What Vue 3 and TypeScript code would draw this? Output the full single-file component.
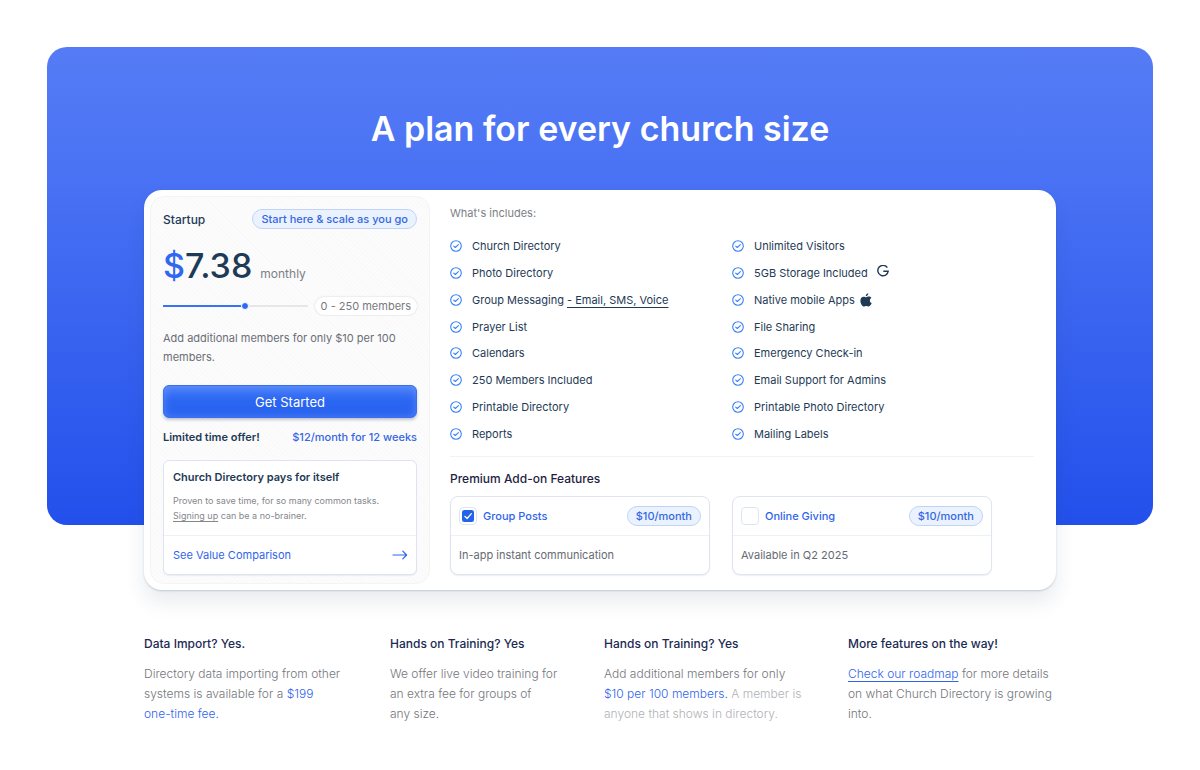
<script setup lang="ts">
import { computed, ref } from 'vue'

interface Feature {
  label: string
  link?: string
  icon?: 'google' | 'apple'
}

interface Addon {
  id: string
  name: string
  price: string
  note: string
  checked: boolean
}

const features: Feature[] = [
  { label: 'Church Directory' },
  { label: 'Unlimited Visitors' },
  { label: 'Photo Directory' },
  { label: '5GB Storage Included', icon: 'google' },
  { label: 'Group Messaging', link: '- Email, SMS, Voice' },
  { label: 'Native mobile Apps', icon: 'apple' },
  { label: 'Prayer List' },
  { label: 'File Sharing' },
  { label: 'Calendars' },
  { label: 'Emergency Check-in' },
  { label: '250 Members Included' },
  { label: 'Email Support for Admins' },
  { label: 'Printable Directory' },
  { label: 'Printable Photo Directory' },
  { label: 'Reports' },
  { label: 'Mailing Labels' },
]

const addons = ref<Addon[]>([
  { id: 'posts', name: 'Group Posts', price: '$10/month', note: 'In-app instant communication', checked: true },
  { id: 'giving', name: 'Online Giving', price: '$10/month', note: 'Available in Q2 2025', checked: false },
])

const size = ref(57)
const fill = computed(() => ({ '--fill': `${size.value}%` }))
</script>

<template>
  <main class="page">
    <section class="hero">
      <h1 class="hero-title">A plan for every church size</h1>

      <div class="plan">
        <div class="offer">
          <div class="row">
            <h2 class="offer-name">Startup</h2>
            <span class="pill">Start here &amp; scale as you go</span>
          </div>
          <p class="price">
            <span class="amount"><span class="currency">$</span>7.38</span>
            <span class="period">monthly</span>
          </p>
          <div class="row slider-row">
            <input id="size" v-model.number="size" class="slider" type="range" min="0" max="100" :style="fill" />
            <label class="size-label" for="size">0 - 250 members</label>
          </div>
          <p class="extra">Add additional members for only $10 per 100 members.</p>
          <button class="cta" type="button">Get Started</button>
          <div class="row deal">
            <strong>Limited time offer!</strong>
            <span class="deal-price">$12/month for 12 weeks</span>
          </div>
          <div class="box value">
            <div class="value-text">
              <h3>Church Directory pays for itself</h3>
              <p>Proven to save time, for so many common tasks. <a href="#signup">Signing up</a> can be a no-brainer.</p>
            </div>
            <a class="row value-link" href="#compare">
              See Value Comparison
              <svg width="16" height="10" viewBox="0 0 16 10" fill="none" stroke="currentColor" stroke-width="1.2" stroke-linecap="round" stroke-linejoin="round" aria-hidden="true">
                <path d="M1 5h13.6M10.8 1.2 14.6 5l-3.8 3.8" />
              </svg>
            </a>
          </div>
        </div>

        <div class="details">
          <p class="includes">What's includes:</p>
          <ul class="features">
            <li v-for="f in features" :key="f.label">
              <svg class="tick" width="12" height="12" viewBox="0 0 12 12" fill="none" stroke="currentColor" stroke-linecap="round" stroke-linejoin="round" aria-hidden="true">
                <circle cx="6" cy="6" r="5.3" stroke-width="1.1" />
                <path d="M3.7 6.1 5.3 7.5 8.4 4.6" stroke-width="1.1" />
              </svg>
              <span>{{ f.label }}<template v-if="f.link">&nbsp;<a href="#messaging">{{ f.link }}</a></template></span>
              <svg v-if="f.icon === 'google'" class="brand google" width="12" height="12" viewBox="0 0 12 12" fill="none" stroke="currentColor" stroke-width="1.4" aria-hidden="true">
                <path d="M10.3 2.6A5.2 5.2 0 1 0 11.2 6.2H6.3" />
              </svg>
              <svg v-if="f.icon === 'apple'" class="brand" width="12" height="14" viewBox="0 0 12 14" fill="currentColor" aria-hidden="true">
                <path d="M8.3.3C8.4 1.8 7.2 3.2 5.8 3.2 5.6 1.8 7 .4 8.3.3ZM11.4 5C10.2 5.7 9.7 6.7 9.9 7.9 10 8.9 10.7 9.7 11.7 10.1 11.1 11.8 9.9 13.5 8.7 13.5 7.8 13.5 7.3 13 6.3 13 5.3 13 4.8 13.5 3.9 13.5 2.2 13.5.4 10.4.4 7.7.4 5.2 1.9 3.7 3.6 3.7 4.7 3.7 5.4 4.3 6.2 4.3 6.9 4.3 7.7 3.6 8.9 3.6 9.8 3.6 10.8 4.1 11.4 5Z" />
              </svg>
            </li>
          </ul>
          <h2 class="addons-title">Premium Add-on Features</h2>
          <div class="addons">
            <div v-for="a in addons" :key="a.id" class="box addon">
              <div class="row addon-head">
                <label class="addon-name">
                  <span class="check">
                    <input v-model="a.checked" type="checkbox" />
                    <svg v-if="a.checked" width="12" height="12" viewBox="0 0 12 12" fill="none" aria-hidden="true">
                      <rect width="12" height="12" rx="2.5" fill="#2563eb" />
                      <path d="m2.8 6.3 2.3 2.2 4.3-4.9" stroke="#fff" stroke-width="1.2" stroke-linecap="round" stroke-linejoin="round" />
                    </svg>
                  </span>
                  {{ a.name }}
                </label>
                <span class="pill">{{ a.price }}</span>
              </div>
              <p class="addon-note">{{ a.note }}</p>
            </div>
          </div>
        </div>
      </div>
    </section>

    <section class="notes">
      <article>
        <h2>Data Import? Yes.</h2>
        <p>Directory data importing from other systems is available for a <em>$199 <br />one-time fee.</em></p>
      </article>
      <article>
        <h2>Hands on Training? Yes</h2>
        <p>We offer live video training for <br />an extra fee for groups of <br />any size.</p>
      </article>
      <article>
        <h2>Hands on Training? Yes</h2>
        <p>Add additional members for only <br /><em>$10 per 100 members.</em> <span class="faint">A member is anyone that shows in directory.</span></p>
      </article>
      <article>
        <h2>More features on the way!</h2>
        <p><a href="#roadmap">Check our roadmap</a> for more details on what Church Directory is growing into.</p>
      </article>
    </section>
  </main>
</template>

<style>
body {
  background: #fff;
}
</style>

<style scoped>
* {
  box-sizing: border-box;
}

h1,
h2,
h3,
p,
ul {
  margin: 0;
  padding: 0;
  font-weight: 400;
}

em {
  font-style: normal;
}

.page {
  padding: 47px 47px 40px;
  font-family: Inter, "Liberation Sans", sans-serif;
  font-size: 11px;
  color: #1e3a56;
}

.hero {
  display: flex;
  flex-direction: column;
  align-items: center;
  padding: 56px 24px 0;
  border-radius: 20px;
  background: linear-gradient(#557cf6, #4a73f4 25%, #2350eb);
}

.hero-title {
  margin-bottom: 35px;
  font-size: 34px;
  line-height: 52px;
  font-weight: 600;
  color: #fff;
}

.plan {
  display: flex;
  width: 100%;
  max-width: 912px;
  margin-bottom: -65px;
  padding: 6px;
  border-radius: 18px;
  background: #fff;
  box-shadow: 0 1px 2px rgba(30, 58, 100, 0.2), 0 12px 20px rgba(30, 58, 100, 0.1);
}

.row {
  display: flex;
  align-items: center;
  justify-content: space-between;
}

.offer {
  flex: 0 0 280px;
  padding: 12px 12px 8px;
  border: 1px solid #f4f4f5;
  border-radius: 14px;
  background: repeating-linear-gradient(45deg, #fcfcfc 0 2px, #f9f9fa 2px 3px);
}

.offer-name {
  font-size: 12px;
  font-weight: 500;
}

.pill {
  padding: 0 8px;
  border: 1px solid #bfd3fb;
  border-radius: 10px;
  background: #eaf2fe;
  font-size: 11px;
  line-height: 18px;
  font-weight: 500;
  color: #3567e3;
}

.price {
  display: flex;
  align-items: baseline;
  gap: 8px;
  margin-top: 13px;
}

.amount {
  font-size: 34px;
  line-height: 48px;
  font-weight: 500;
}

.currency {
  color: #3069f0;
}

.period {
  font-size: 12px;
  line-height: 16px;
  color: #7c7f86;
}

.slider-row {
  gap: 7px;
  margin-top: 7px;
}

.slider {
  flex: 1;
  min-width: 0;
  height: 8px;
  margin: 0;
  appearance: none;
  background: linear-gradient(90deg, #3b72f2 var(--fill), #e6e7ea var(--fill)) center / 100% 2px no-repeat;
}

.slider::-webkit-slider-thumb {
  width: 8px;
  height: 8px;
  appearance: none;
  border: 1px solid #fff;
  border-radius: 50%;
  background: #2f68f0;
}

.size-label {
  padding: 0 6px;
  border-radius: 9px;
  background: #fff;
  box-shadow: 0 0 2px rgba(20, 30, 60, 0.2);
  line-height: 18px;
  color: #77797f;
}

.extra {
  margin-top: 14px;
  line-height: 19px;
  color: #6b6e76;
}

.cta {
  display: block;
  width: 100%;
  height: 33px;
  margin-top: 18px;
  border: 1px solid #3a6df0;
  border-radius: 6px;
  background: linear-gradient(#4b80f8, #2c67f2 45%, #2560ee);
  box-shadow: inset 0 0 8px rgba(130, 170, 255, 0.5), 0 2px 3px rgba(20, 40, 90, 0.25);
  font: inherit;
  font-size: 13px;
  color: #fff;
}

.deal {
  margin: 10px 0 14px;
  line-height: 18px;
  font-weight: 500;
}

.deal strong {
  font-weight: 600;
}

.deal-price {
  color: #3567e3;
}

.box {
  border: 1px solid #dfe5ef;
  background: #fff;
  box-shadow: 0 1px 1px rgba(40, 60, 100, 0.08);
}

.value {
  border-radius: 6px;
}

.value-text {
  padding: 7px 9px 12px;
}

.value h3 {
  margin-bottom: 7px;
  font-size: 11px;
  line-height: 18px;
  font-weight: 600;
}

.value p {
  font-size: 9px;
  line-height: 15px;
  color: #85878c;
}

.value p a {
  color: inherit;
  text-underline-offset: 2px;
}

.value-link {
  padding: 0 8px 0 9px;
  border-top: 1px solid #eef0f4;
  font-size: 11px;
  line-height: 38px;
  color: #2f64ec;
  text-decoration: none;
}

.details {
  flex: 1;
  min-width: 0;
  display: flex;
  flex-direction: column;
  padding: 8px 16px 9px 20px;
}

.includes {
  line-height: 18px;
  color: #7c7f86;
}

.features,
.addons {
  display: grid;
  grid-template-columns: repeat(2, minmax(0, 260px));
  column-gap: 22px;
}

.features {
  flex: 1;
  grid-auto-rows: 1fr;
  padding: 11px 0 9px;
  border-bottom: 1px solid #f1f2f4;
  list-style: none;
}

.features li {
  display: flex;
  align-items: center;
  line-height: 18px;
}

.features a {
  color: inherit;
  text-underline-offset: 3px;
}

.tick {
  margin-right: 10px;
  color: #3b82f6;
}

.brand {
  margin-left: 5px;
}

.google {
  margin: 0 0 5px 9px;
}

.addons-title {
  margin: 13px 0 8px;
  font-size: 12px;
  line-height: 18px;
  font-weight: 500;
  color: #1f1d45;
}

.addon {
  border-radius: 8px;
}

.addon-head {
  padding: 9px 8px;
  border-bottom: 1px solid #eef0f4;
}

.addon-name {
  display: flex;
  align-items: center;
  gap: 6px;
  font-weight: 500;
  color: #2f64ec;
}

.check {
  display: grid;
  place-items: center;
}

.check > * {
  grid-area: 1 / 1;
}

.check input {
  width: 18px;
  height: 18px;
  margin: 0;
  appearance: none;
  border: 1px solid #dfe5ef;
  border-radius: 4px;
  background: #fff;
}

.check svg {
  pointer-events: none;
}

.addon-note {
  padding: 0 8px;
  line-height: 38px;
  color: #666a73;
}

.notes {
  display: grid;
  grid-template-columns: 246fr 214fr 244fr 208fr;
  max-width: 912px;
  margin: 109px auto 0;
  font-size: 12px;
  line-height: 20px;
  color: #74767c;
}

.notes p {
  font-weight: 300;
}

.notes article {
  padding-right: 36px;
}

.notes article:last-child {
  padding-right: 0;
}

.notes h2 {
  margin-bottom: 10px;
  font-size: 12px;
  font-weight: 500;
  color: #1b2a52;
}

.notes em,
.notes a {
  color: #2f64ec;
}

.notes a {
  text-underline-offset: 3px;
}

.notes .faint {
  color: #b0b2b7;
}
</style>
